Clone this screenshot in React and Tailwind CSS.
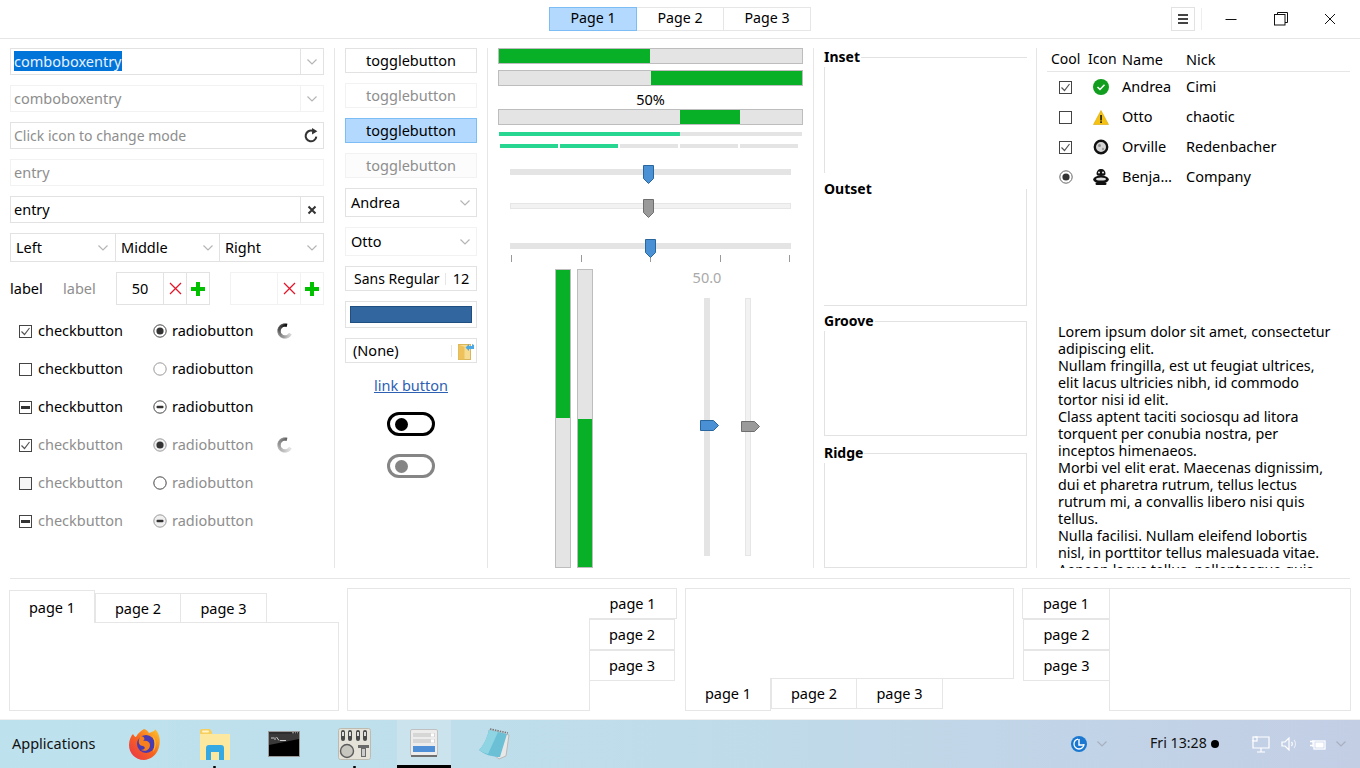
import React from 'react';

const Chevron = ({ className = 'text-[#b5b5b5]' }) => (
  <svg width="12" height="8" viewBox="0 0 12 8" className={className} fill="none" stroke="currentColor" strokeWidth="1.2">
    <path d="M1.5 1.5 L6 6 L10.5 1.5" />
  </svg>
);

const Check = ({ state = 'on', faded = false }) => (
  <svg width="13" height="13" viewBox="0 0 13 13" className="shrink-0">
    <rect x="0.5" y="0.5" width="12" height="12" fill={faded ? '#f6f6f6' : '#fff'} stroke="#444" />
    {state === 'on' && <path d="M2.5 6.5 L5.5 9.5 L10.5 3" fill="none" stroke="#555" strokeWidth="1.2" />}
    {state === 'mixed' && <rect x="2" y="5" width="9" height="3" fill="#333" />}
  </svg>
);

const Radio = ({ state = 'on', ring = '#444', fill = '#fff' }) => (
  <svg width="14" height="14" viewBox="0 0 14 14" className="shrink-0">
    <circle cx="7" cy="7" r="6.2" fill={fill} stroke={ring} />
    {state === 'on' && <circle cx="7" cy="7" r="3.6" fill="#333" />}
    {state === 'mixed' && <rect x="3.5" y="5.8" width="7" height="2.4" rx="1" fill="#333" />}
  </svg>
);

// dark at the top, fading counter-clockwise round the left to the lower right
const Spinner = ({ dark = true }) => {
  const steps = Array.from({ length: 26 }, (_, i) => i);
  return (
    <svg width="16" height="16" viewBox="0 0 16 16" className="shrink-0">
      {steps.map((i) => {
        const a0 = (-70 - i * 10) * (Math.PI / 180);
        const a1 = (-70 - (i + 1.3) * 10) * (Math.PI / 180);
        const level = dark ? 10 + i * 8 : 100 + i * 5;
        return (
          <path
            key={i}
            d={`M${8 + 6 * Math.cos(a0)} ${8 + 6 * Math.sin(a0)} L${8 + 6 * Math.cos(a1)} ${8 + 6 * Math.sin(a1)}`}
            stroke={`rgb(${level},${level},${level})`}
            strokeWidth="3.2"
            fill="none"
          />
        );
      })}
    </svg>
  );
};

const Entry = ({ children, disabled, right, sep }) => (
  <div className={`flex h-[27px] items-center border ${disabled ? 'border-[#f2f2f2]' : 'border-[#e2e2e2]'}`}>
    <div className="flex-1 pb-[2px] pl-[3px] whitespace-nowrap">{children}</div>
    {right && (
      <div className={`flex h-full w-[23px] items-center justify-center ${sep ? (disabled ? 'border-l border-[#f2f2f2]' : 'border-l border-[#e2e2e2]') : ''}`}>
        {right}
      </div>
    )}
  </div>
);

const Spin = ({ value, disabled }) => {
  const line = disabled ? 'border-[#f2f2f2]' : 'border-[#e2e2e2]';
  return (
    <div className={`flex h-[33px] w-[94px] border ${line}`}>
      <div className="flex w-[46px] items-center justify-center pb-[2px]">{value}</div>
      <div className={`flex w-[23px] items-center justify-center border-l ${line}`}>
        <svg width="13" height="13" viewBox="0 0 13 13" fill="none" stroke="#e0162b" strokeWidth="1.3">
          <path d="M1 1 L12 12 M12 1 L1 12" />
        </svg>
      </div>
      <div className={`flex w-[23px] items-center justify-center border-l ${line}`}>
        <svg width="14" height="14" viewBox="0 0 14 14" fill="#00c000">
          <path d="M5 0 H9 V5 H14 V9 H9 V14 H5 V9 H0 V5 H5 Z" />
        </svg>
      </div>
    </div>
  );
};

const Toggle = ({ disabled, active, muted }) => (
  <div
    className={`flex h-[25px] items-center justify-center border pb-[2px] ${
      active
        ? 'border-[#7dbdf5] bg-[#b3d9ff]'
        : muted
          ? 'border-[#f2f2f2] bg-[#fcfcfc] text-[#8e8e8e]'
          : disabled
            ? 'border-[#f2f2f2] text-[#8e8e8e]'
            : 'border-[#e2e2e2]'
    }`}
  >
    togglebutton
  </div>
);

const ComboBtn = ({ label, faint }) => (
  <div className={`flex h-[29px] items-center justify-between border pr-[5px] pl-[5px] ${faint ? 'border-[#f2f2f2]' : 'border-[#e2e2e2]'}`}>
    <span className="pb-[2px]">{label}</span>
    <Chevron />
  </div>
);

const HBar = ({ from, width }) => (
  <div className="relative h-[16px] border border-[#bdbdbd] bg-[#e4e4e4]">
    <div className="absolute top-0 bottom-0 bg-[#07b026]" style={{ left: from, width }} />
  </div>
);

const VBar = ({ top, height }) => (
  <div className="relative h-full w-[16px] border border-[#bdbdbd] bg-[#e4e4e4]">
    <div className="absolute right-0 left-0 bg-[#07b026]" style={{ top, height }} />
  </div>
);

const HandleDown = ({ blue, left, top }) => (
  <svg width="11" height="19" viewBox="0 0 11 19" className="absolute" style={{ left, top }}>
    <path d="M0.5 0.5 H10.5 V13.5 L5.5 18.5 L0.5 13.5 Z" fill={blue ? '#4a90d4' : '#9a9a9a'} stroke={blue ? '#2a669e' : '#6e6e6e'} />
  </svg>
);

const HandleRight = ({ blue, left }) => (
  <svg width="19" height="11" viewBox="0 0 19 11" className="absolute top-[122px]" style={{ left }}>
    <path d="M0.5 0.5 H13.5 L18.5 5.5 L13.5 10.5 H0.5 Z" fill={blue ? '#4a90d4' : '#9a9a9a'} stroke={blue ? '#2a669e' : '#6e6e6e'} />
  </svg>
);

const Frame = ({ label, className, labelClass = '-top-[11px] -left-px' }) => (
  <div className={`relative ${className}`}>
    <span className={`absolute bg-white pr-[1px] text-[14px] leading-[20px] font-bold ${labelClass}`}>{label}</span>
  </div>
);

const OkIcon = () => (
  <svg width="16" height="16" viewBox="0 0 16 16">
    <circle cx="8" cy="8" r="8" fill="#119e1f" />
    <path d="M4.5 8 L7 10.5 L11.5 5.8" fill="none" stroke="#fff" strokeWidth="1.5" />
  </svg>
);

const WarnIcon = () => (
  <svg width="16" height="15" viewBox="0 0 16 15">
    <path d="M8 0.5 L15.5 14.5 H0.5 Z" fill="#f5c211" stroke="#d8a60a" strokeWidth="0.6" />
    <rect x="7.2" y="5" width="1.7" height="5.5" fill="#222" />
    <rect x="7.2" y="11.3" width="1.7" height="1.7" fill="#222" />
  </svg>
);

const MoonIcon = () => (
  <svg width="16" height="16" viewBox="0 0 16 16">
    <circle cx="8" cy="8" r="6.2" fill="#d4d4d4" stroke="#111" strokeWidth="2.4" />
    <circle cx="6.5" cy="6.5" r="1.5" fill="#8f8f8f" />
    <circle cx="10" cy="10" r="1.2" fill="#9d9d9d" />
  </svg>
);

const MonkeyIcon = () => (
  <svg width="16" height="16" viewBox="0 0 16 16">
    <path d="M8 0 C11 0 12.5 2 12.5 5 C12.5 6 11 7 8 7 C5 7 3.5 6 3.5 5 C3.5 2 5 0 8 0 Z" fill="#111" />
    <circle cx="6" cy="3.6" r="1" fill="#eee" />
    <circle cx="10" cy="3.6" r="1" fill="#eee" />
    <ellipse cx="8" cy="10.5" rx="7.8" ry="4" fill="#111" />
    <ellipse cx="8" cy="10" rx="5" ry="1.6" fill="#ddd" />
    <rect x="2.5" y="13.5" width="11" height="2.5" rx="1.2" fill="#111" />
  </svg>
);

const Tab = ({ className, children }) => (
  <div className={`flex shrink-0 items-center justify-center border border-[#e6e6e6] bg-white ${className}`}>{children}</div>
);

const FirefoxIcon = () => (
  <svg width="33" height="33" viewBox="0 0 33 33">
    <defs>
      <linearGradient id="ffA" x1="0" y1="1" x2="1" y2="0">
        <stop offset="0" stopColor="#e8304f" />
        <stop offset="0.5" stopColor="#f7641e" />
        <stop offset="1" stopColor="#ffca2c" />
      </linearGradient>
    </defs>
    <path d="M16 1 C19 2 20 3 21 5 C25 4 28 2 27 1 C29 3 31 6 31.5 10 C33 18 29 31 16 32 C7 32 1 25 1 17 C1 12 3 8 5 6 C6 8 7 9 8 9 C10 5 13 3 16 1 Z" fill="url(#ffA)" />
    <circle cx="18" cy="16" r="9" fill="#4b3bb0" />
    <path d="M12 8 C16 8 18 11 15 13 C19 12 22 14 22 17 C22 22 17 24 13 22 C17 22 18 19 15 18 C12 18 10 15 11 12 Z" fill="#f7801e" />
    <path d="M24 7 C29 11 29 19 25 24 C27 18 27 12 24 7 Z" fill="#ffb52c" />
  </svg>
);

const FolderIcon = () => (
  <svg width="32" height="32" viewBox="0 0 32 32">
    <path d="M1 3 C1 1.5 2 1 3 1 H11 L13 4 H13 V7 H1 Z" fill="#f6cf5f" />
    <rect x="3" y="2.5" width="7" height="2" rx="1" fill="#fff3c9" />
    <rect x="1" y="6" width="30" height="26" fill="#fde8a0" />
    <path d="M7 32 V20 C7 18 8 17 10 17 H22 C24 17 25 18 25 20 V32 H20 V24 H12 V32 Z" fill="#35a9e3" />
  </svg>
);

const TerminalIcon = () => (
  <svg width="32" height="26" viewBox="0 0 32 26">
    <rect x="0" y="0" width="32" height="26" fill="#9a9a9a" />
    <rect x="1" y="1" width="30" height="24" fill="#2e2e2e" />
    <rect x="1" y="3" width="30" height="22" fill="#000" />
    <path d="M1 3 H31 V8 L1 14 Z" fill="#3a3a3a" />
    <path d="M3 7 H6 M7 6.5 V9 M8.5 6 L11 9.5 M12 9.5 H18" stroke="#ddd" strokeWidth="0.9" fill="none" />
    <path d="M24 1.8 H26 M27 1.8 H28 M29 1.8 H30" stroke="#ccc" strokeWidth="0.8" />
  </svg>
);

const MixerIcon = () => (
  <svg width="33" height="33" viewBox="0 0 33 33">
    <rect x="0.5" y="0.5" width="32" height="31" rx="2" fill="#e4e2d9" stroke="#bdbbb0" />
    {[5, 12, 20, 27].map((x) => (
      <g key={x}>
        <rect x={x - 2} y="2" width="4" height="11" rx="2" fill="#4a4a4a" />
        <rect x={x - 1} y="4" width="2" height="4" fill="#ddd" />
      </g>
    ))}
    <circle cx="9" cy="23" r="6.5" fill="#c7c6bf" stroke="#5c5c5c" strokeWidth="1.4" />
    <path d="M20 17 H31 V20 H28 V29 H23 V20 H20 Z" fill="#6a6a6a" />
    <rect x="24" y="21" width="3" height="7" fill="#ccc" />
  </svg>
);

const WidgetIcon = () => (
  <svg width="28" height="28" viewBox="0 0 28 28">
    <rect x="0.5" y="0.5" width="27" height="26" rx="1.5" fill="#ececec" stroke="#c0c0c0" />
    <rect x="3" y="4" width="22" height="4" fill="#d6d6d6" />
    <rect x="3" y="10" width="22" height="4" fill="#d6d6d6" />
    <rect x="21" y="4.5" width="3" height="3" fill="#fff" />
    <rect x="21" y="10.5" width="3" height="3" fill="#fff" />
    <rect x="3" y="17" width="22" height="6" fill="#4e8fd8" />
    <rect x="1" y="26" width="26" height="2" fill="#6f6f6f" />
  </svg>
);

const NotepadIcon = () => (
  <svg width="32" height="32" viewBox="0 0 32 32">
    <path d="M11 2 L31 7 L28 28 L21 31 L12 24 Z" fill="#e8e8e8" stroke="#b8b8b8" />
    <path d="M11 2 L29 6 L22 29 C15 29 7 27 1 22 C6 17 9 10 11 2 Z" fill="#6cc0d6" />
    <path d="M11 2 L20 4 L10 26 C7 25 4 24 1 22 C6 17 9 10 11 2 Z" fill="#8ed4e3" />
    <path d="M12 1 L30 5" stroke="#777" strokeWidth="1.6" strokeDasharray="1.5 1" />
  </svg>
);

const FileIcon = () => (
  <svg width="16" height="18" viewBox="0 0 16 18">
    <rect x="0.5" y="2.5" width="12" height="15" fill="#f5dc92" stroke="#d9b65a" />
    <path d="M0.5 2.5 L6.5 5 V17.5 H0.5 Z" fill="#eec15a" />
    <path d="M16 3 V7 H11 V9 L7.5 5.5 L11 2 V4 H14 V2 Z" fill="#4aa8e6" />
  </svg>
);

const lorem = [
  'Lorem ipsum dolor sit amet, consectetur',
  'adipiscing elit.',
  'Nullam fringilla, est ut feugiat ultrices,',
  'elit lacus ultricies nibh, id commodo',
  'tortor nisi id elit.',
  'Class aptent taciti sociosqu ad litora',
  'torquent per conubia nostra, per',
  'inceptos himenaeos.',
  'Morbi vel elit erat. Maecenas dignissim,',
  'dui et pharetra rutrum, tellus lectus',
  'rutrum mi, a convallis libero nisi quis',
  'tellus.',
  'Nulla facilisi. Nullam eleifend lobortis',
  'nisl, in porttitor tellus malesuada vitae.',
  'Aenean lacus tellus, pellentesque quis',
];

const checkRows = [
  { c: 'on', r: 'on', spin: true },
  { c: 'off', r: 'off', ringLight: true },
  { c: 'mixed', r: 'mixed' },
  { c: 'on', r: 'on', spin: true, off: true, radioFill: '#f0f0f0', ringLight: true },
  { c: 'off', r: 'off', off: true, faded: true },
  { c: 'mixed', r: 'mixed', off: true, radioFill: '#f0f0f0', ringLight: true },
];

const treeRows = [
  { box: <Check state="on" />, icon: <OkIcon />, name: 'Andrea', nick: 'Cimi' },
  { box: <Check state="off" />, icon: <WarnIcon />, name: 'Otto', nick: 'chaotic' },
  { box: <Check state="on" />, icon: <MoonIcon />, name: 'Orville', nick: 'Redenbacher' },
  { box: <Radio state="on" ring="#666" />, icon: <MonkeyIcon />, name: 'Benja…', nick: 'Company' },
];

const App = () => {
  return (
    <div className="flex h-[768px] w-[1360px] flex-col overflow-hidden bg-white text-[14.5px] leading-[20px] text-black [font-family:'Noto_Sans',sans-serif]">
      {/* header bar */}
      <div className="relative flex h-[39px] shrink-0 items-center justify-end border-b border-[#e6e6e6] pb-[1px]">
        <div className="absolute top-[7px] left-[549px] flex h-[24px] text-[14.2px]">
          <div className="flex w-[88px] items-center justify-center border border-[#7dbdf5] bg-[#b3d9ff] pb-[2px]">Page 1</div>
          <div className="flex w-[87px] items-center justify-center border-y border-r border-[#e6e6e6] pb-[2px]">Page 2</div>
          <div className="flex w-[87px] items-center justify-center border-y border-r border-[#e6e6e6] pb-[2px]">Page 3</div>
        </div>
        <div className="flex h-[24px] w-[24px] items-center justify-center border border-[#e2e2e2]">
          <div className="flex flex-col gap-[2px]">
            <div className="h-[2px] w-[10px] bg-[#444]" />
            <div className="h-[2px] w-[10px] bg-[#444]" />
            <div className="h-[2px] w-[10px] bg-[#444]" />
          </div>
        </div>
        <div className="mr-[3px] ml-[6px] h-[22px] w-px bg-[#eeeeee]" />
        <div className="flex w-[52px] justify-center">
          <svg width="12" height="12" viewBox="0 0 12 12" stroke="#111"><path d="M0.5 6.5 H11.5" /></svg>
        </div>
        <div className="flex w-[48px] justify-center">
          <svg width="14" height="14" viewBox="0 0 14 14" fill="none" stroke="#111">
            <path d="M3.5 2.5 V0.5 H13.5 V10.5 H11" />
            <rect x="0.5" y="2.5" width="10.5" height="10.5" fill="#fff" />
          </svg>
        </div>
        <div className="mr-[5px] flex w-[50px] justify-center">
          <svg width="12" height="12" viewBox="0 0 12 12" stroke="#111"><path d="M1 1 L11 11 M11 1 L1 11" /></svg>
        </div>
      </div>

      {/* widget columns */}
      <div className="mt-[9px] flex h-[520px] shrink-0 pl-[10px]">
        <div className="flex w-[314px] flex-col">
          <div className="flex flex-col gap-[10px]">
            <Entry right={<Chevron />} sep>
              <span className="bg-[#0074d9] text-[#e8f2ff]">comboboxentry</span>
            </Entry>
            <Entry disabled right={<Chevron />} sep>
              <span className="text-[#8e8e8e]">comboboxentry</span>
            </Entry>
            <Entry
              right={
                <svg width="15" height="15" viewBox="0 0 14 14" fill="none">
                  <path d="M11.5 8 A5 5 0 1 1 8 2.6" stroke="#333" strokeWidth="1.9" />
                  <path d="M7.5 0 L12.5 3 L7.5 6 Z" fill="#333" />
                </svg>
              }
            >
              <span className="relative top-px text-[14px] text-[#8e8e8e]">Click icon to change mode</span>
            </Entry>
            <Entry disabled>
              <span className="text-[#8e8e8e]">entry</span>
            </Entry>
            <Entry
              right={
                <svg width="10" height="10" viewBox="0 0 10 10" stroke="#333" strokeWidth="2">
                  <path d="M1.5 1.5 L8.5 8.5 M8.5 1.5 L1.5 8.5" />
                </svg>
              }
              sep
            >
              entry
            </Entry>
          </div>

          <div className="mt-[10px] flex h-[29px] border border-[#e2e2e2]">
            <div className="flex w-[105px] items-center justify-between border-r border-[#e2e2e2] pr-[6px] pl-[5px]">
              <span className="pb-[2px]">Left</span>
              <Chevron />
            </div>
            <div className="flex w-[104px] items-center justify-between border-r border-[#e2e2e2] pr-[5px] pl-[5px]">
              <span className="pb-[2px]">Middle</span>
              <Chevron />
            </div>
            <div className="flex flex-1 items-center justify-between pr-[5px] pl-[5px]">
              <span className="pb-[2px]">Right</span>
              <Chevron />
            </div>
          </div>

          <div className="mt-[10px] flex h-[33px] items-center">
            <span className="w-[53px] pb-[2px]">label</span>
            <span className="w-[53px] pb-[2px] text-[#8e8e8e]">label</span>
            <Spin value="50" />
            <div className="ml-[20px]">
              <Spin disabled />
            </div>
          </div>

          <div className="mt-[7px] flex flex-col">
            {checkRows.map((row, i) => (
              <div key={i} className={`flex h-[38px] items-center pl-[9px] ${row.off ? 'text-[#8e8e8e]' : ''}`}>
                <div className="flex w-[134px] items-center gap-[6px]">
                  <Check state={row.c} faded={row.faded} />
                  <span className="pb-[2px]">checkbutton</span>
                </div>
                <div className="flex w-[124px] items-center gap-[5px]">
                  <Radio state={row.r} ring={row.ringLight ? '#999' : '#444'} fill={row.radioFill || '#fff'} />
                  <span className="pb-[2px]">radiobutton</span>
                </div>
                {row.spin && <Spinner dark={!row.off} />}
              </div>
            ))}
          </div>
        </div>

        <div className="ml-[10px] w-px bg-[#e6e6e6]" />

        <div className="ml-[10px] flex w-[132px] flex-col gap-[10px]">
          <Toggle />
          <Toggle disabled />
          <Toggle active />
          <Toggle muted />
          <ComboBtn label="Andrea" />
          <ComboBtn label="Otto" faint />
          <div className="flex h-[25px] items-center border border-[#e2e2e2] pl-[8px]">
            <span className="w-[91px] text-[14px] whitespace-nowrap">Sans Regular</span>
            <div className="h-[12px] w-px bg-[#e6e6e6]" />
            <span className="flex-1 pb-[2px] text-center">12</span>
          </div>
          <div className="flex h-[27px] items-center justify-center border border-[#e2e2e2]">
            <div className="h-[17px] w-[122px] border border-[#1f4f80] bg-[#32669e]" />
          </div>
          <div className="flex h-[25px] items-center border border-[#e2e2e2] pl-[7px]">
            <span className="w-[98px] pb-[2px]">(None)</span>
            <div className="h-[12px] w-px bg-[#e6e6e6]" />
            <div className="ml-[6px]">
              <FileIcon />
            </div>
          </div>
          <div className="flex h-[28px] items-center justify-center pb-[4px]">
            <span className="text-[#2d5fb3] underline">link button</span>
          </div>
          <div className="mt-[1px] flex justify-center">
            <div className="flex h-[24px] w-[48px] items-center rounded-full border-[3px] border-black pl-[5px]">
              <div className="h-[13px] w-[13px] rounded-full bg-black" />
            </div>
          </div>
          <div className="mt-[8px] flex justify-center">
            <div className="flex h-[24px] w-[48px] items-center rounded-full border-[3px] border-[#858585] pl-[5px]">
              <div className="h-[13px] w-[13px] rounded-full bg-[#858585]" />
            </div>
          </div>
        </div>

        <div className="ml-[10px] w-px bg-[#e6e6e6]" />

        <div className="ml-[10px] flex w-[305px] flex-col">
          <HBar from={0} width={151} />
          <div className="mt-[6px]">
            <HBar from={152} width={151} />
          </div>
          <div className="flex h-[23px] items-end justify-center leading-[20px]">50%</div>
          <HBar from={181} width={60} />
          <div className="mt-[7px] ml-px h-[4px] w-[303px] bg-[#e4e4e4]">
            <div className="h-full w-[181px] bg-[#27d690]" />
          </div>
          <div className="mt-[8px] ml-[2px] flex gap-[2px]">
            <div className="h-[4px] w-[58px] bg-[#27d690]" />
            <div className="h-[4px] w-[58px] bg-[#27d690]" />
            <div className="h-[4px] w-[58px] bg-[#e4e4e4]" />
            <div className="h-[4px] w-[58px] bg-[#e4e4e4]" />
            <div className="h-[4px] w-[58px] bg-[#e4e4e4]" />
          </div>
          <div className="relative mx-[12px] mt-[21px] h-[6px] bg-[#e4e4e4]">
            <HandleDown blue left={133} top={-4} />
          </div>
          <div className="relative mx-[12px] mt-[28px] h-[6px] border border-[#e6e6e6] bg-[#f2f2f2]">
            <HandleDown left={132} top={-5} />
          </div>
          <div className="relative mx-[12px] mt-[34px] h-[6px] bg-[#e4e4e4]">
            <HandleDown blue left={135} top={-4} />
          </div>
          <div className="mt-[6px] ml-[13px] flex h-[7px] w-[279px] justify-between">
            <div className="w-px bg-[#999]" />
            <div className="w-px bg-[#999]" />
            <div className="w-px bg-[#999]" />
            <div className="w-px bg-[#999]" />
            <div className="w-px bg-[#999]" />
          </div>
          <div className="mt-[7px] flex h-[299px]">
            <div className="ml-[57px]">
              <VBar top={0} height={148} />
            </div>
            <div className="ml-[6px]">
              <VBar top={149} height={148} />
            </div>
            <div className="ml-[94px] flex w-[40px] flex-col items-center">
              <div className="-mt-[2px] flex h-[31px] items-start text-[#a9a9a9]">50.0</div>
              <div className="relative h-[258px] w-[6px] bg-[#e4e4e4]">
                <HandleRight blue left={-4} />
              </div>
            </div>
            <div className="relative mt-[29px] ml-[18px] h-[258px] w-[6px] border border-[#e6e6e6] bg-[#f2f2f2]">
              <HandleRight left={-5} />
            </div>
          </div>
        </div>

        <div className="ml-[10px] w-px bg-[#e6e6e6]" />

        <div className="ml-[10px] flex w-[203px] flex-col pt-[9px]">
          <Frame label="Inset" className="h-[116px] border-t border-l border-[#e2e2e2]" />
          <Frame label="Outset" labelClass="-top-[10px] left-0" className="mt-[16px] h-[117px] border-r border-b border-[#e2e2e2]" />
          <Frame label="Groove" className="mt-[15px] h-[115px] border border-[#e2e2e2]" />
          <Frame label="Ridge" className="mt-[17px] h-[115px] border border-[#e2e2e2]" />
        </div>

        <div className="ml-[9px] w-px bg-[#e6e6e6]" />

        <div className="ml-[10px] flex w-[303px] flex-col">
          <div className="grid h-[24px] grid-cols-[37px_34px_64px_1fr] items-center border-b border-[#e6e6e6] pb-[2px]">
            <span className="pl-[4px] text-[14px]">Cool</span>
            <span className="pl-[4px] text-[14px]">Icon</span>
            <span className="pl-[4px]">Name</span>
            <span className="pl-[4px]">Nick</span>
          </div>
          {treeRows.map((row) => (
            <div key={row.name} className="grid h-[30px] grid-cols-[37px_34px_64px_1fr] items-center">
              <div className="flex justify-center">{row.box}</div>
              <div className="flex justify-center">{row.icon}</div>
              <span className="pb-[2px] pl-[4px]">{row.name}</span>
              <span className="pb-[2px] pl-[4px]">{row.nick}</span>
            </div>
          ))}
          <div className="mt-[131px] h-[245px] overflow-hidden pl-[11px] text-[14.3px] leading-[17px]">
            {lorem.map((line) => (
              <div key={line} className="whitespace-nowrap">{line}</div>
            ))}
          </div>
        </div>
      </div>

      <div className="mx-[10px] mt-[10px] h-px shrink-0 bg-[#e6e6e6]" />

      {/* notebooks */}
      <div className="mt-[9px] flex h-[123px] shrink-0 gap-[8px] pl-[9px]">
        <div className="flex w-[330px] flex-col">
          <div className="flex h-[34px] items-end">
            <Tab className="relative z-10 -mb-px h-[33px] w-[86px] border-b-0">page 1</Tab>
            <Tab className="h-[29px] w-[86px] border-b-0">page 2</Tab>
            <Tab className="-ml-px h-[29px] w-[87px] border-b-0">page 3</Tab>
          </div>
          <div className="flex-1 border border-[#e6e6e6]" />
        </div>

        <div className="flex w-[330px]">
          <div className="w-[243px] border border-[#e6e6e6]" />
          <div className="flex flex-col">
            <Tab className="-ml-px h-[31px] w-[88px] border-l-0 pb-[2px]">page 1</Tab>
            <Tab className="-ml-px h-[31px] w-[86px] pb-[2px]">page 2</Tab>
            <Tab className="-ml-px h-[31px] w-[86px] pb-[2px]">page 3</Tab>
          </div>
        </div>

        <div className="flex w-[329px] flex-col">
          <div className="h-[91px] border border-[#e6e6e6]" />
          <div className="flex">
            <Tab className="-mt-px h-[33px] w-[86px] border-t-0 pb-[2px]">page 1</Tab>
            <Tab className="-mt-px h-[31px] w-[86px] pb-[2px]">page 2</Tab>
            <Tab className="-mt-px -ml-px h-[31px] w-[87px] pb-[2px]">page 3</Tab>
          </div>
        </div>

        <div className="flex w-[329px]">
          <div className="flex w-[87px] flex-col items-end">
            <Tab className="h-[31px] w-[87px] border-r-0 pb-[2px]">page 1</Tab>
            <Tab className="h-[31px] w-[86px] border-r-0 pb-[2px]">page 2</Tab>
            <Tab className="h-[31px] w-[86px] border-r-0 pb-[2px]">page 3</Tab>
          </div>
          <div className="flex-1 border border-[#e6e6e6]" />
        </div>
      </div>

      <div className="mt-[8px] h-px shrink-0 bg-[#f0f0f0]" />

      {/* taskbar */}
      <div className="relative flex h-[48px] shrink-0 items-center bg-[linear-gradient(90deg,#bde2ee_0%,#bfdcea_50%,#c3cee5_100%)]">
        <span className="ml-[12px] w-[116px] pb-[2px] text-[#111]">Applications</span>
        <div className="w-[71px]"><FirefoxIcon /></div>
        <div className="w-[69px]"><FolderIcon /></div>
        <div className="w-[70px]"><TerminalIcon /></div>
        <div className="w-[59px]"><MixerIcon /></div>
        <div className="flex h-full w-[54px] items-center justify-center border-b-[3px] border-black bg-[#cbe3ec]"><WidgetIcon /></div>
        <div className="ml-[27px]"><NotepadIcon /></div>
        <div className="absolute bottom-0 left-[213px] h-[2px] w-[3px] rounded-full bg-black" />
        <div className="absolute bottom-0 left-[353px] h-[2px] w-[3px] rounded-full bg-black" />

        <div className="ml-auto flex items-center">
          <svg width="16" height="16" viewBox="0 0 16 16" fill="none">
            <circle cx="8" cy="8" r="8" fill="#1a78d0" />
            <circle cx="8" cy="8" r="5" stroke="#fff" strokeWidth="1.3" strokeDasharray="22 10" />
            <path d="M8 3 V9 H13" stroke="#fff" strokeWidth="1.4" />
          </svg>
          <div className="ml-[9px] flex w-[54px]"><Chevron className="text-[#a8b0bf]" /></div>
          <span className="w-[61px] pb-[2px] text-[14.2px] whitespace-nowrap text-[#111]">Fri 13:28</span>
          <div className="h-[8px] w-[8px] rounded-full bg-black" />
          <svg className="ml-[33px]" width="18" height="17" viewBox="0 0 18 17" fill="none" stroke="#fff" strokeWidth="1.2">
            <path d="M3 1 H17 V12 H1 V4" />
            <rect x="1" y="1" width="4" height="4" />
            <path d="M9 12 V16 M5 16 H13" />
          </svg>
          <svg className="ml-[11px]" width="17" height="14" viewBox="0 0 17 14" fill="none" stroke="#fff" strokeWidth="1.2">
            <path d="M1 5 H4 L8 1 V13 L4 9 H1 Z" />
            <path d="M10.5 5 C11.5 6 11.5 8 10.5 9" />
            <path d="M13 3 C15 5 15 9 13 11" opacity="0.6" />
          </svg>
          <svg className="ml-[11px]" width="17" height="12" viewBox="0 0 17 12" fill="none" stroke="#fff" strokeWidth="1.3">
            <path d="M1 3.5 H4 M1 7.5 H4 M4 2 V9" />
            <rect x="5" y="3" width="11" height="8" />
            <rect x="7" y="5" width="7" height="4" fill="#fff" />
          </svg>
          <div className="mr-[13px] ml-[9px]"><Chevron className="text-[#a8b0bf]" /></div>
        </div>
      </div>
    </div>
  );
};

export default App;
